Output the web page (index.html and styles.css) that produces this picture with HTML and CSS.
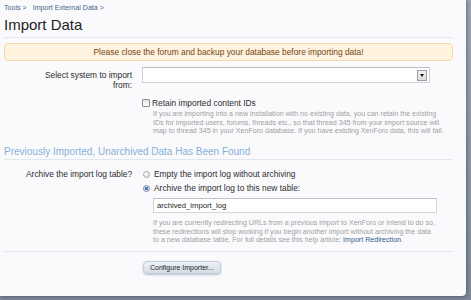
FILE: index.html
```html
<!DOCTYPE html>
<html>
<head>
<meta charset="utf-8">
<link rel="stylesheet" href="styles.css">
</head>
<body>
<div class="panel">
  <div class="breadcrumb"><span class="crumb">Tools &gt;</span><span class="crumb">Import External Data &gt;</span></div>
  <h1 class="title">Import Data</h1>
  <div class="notice">Please close the forum and backup your database before importing data!</div>
  <div class="form">
    <div class="row">
      <div class="label">Select system to import from:</div>
      <div class="ctrl">
        <div class="select"><span class="arrow"></span></div>
      </div>
    </div>
    <div class="row row-check">
      <div class="label"></div>
      <div class="ctrl">
        <div class="check"><span class="box"></span>Retain imported content IDs</div>
        <p class="explain">If you are importing into a new installation with no existing data, you can retain the existing<br>IDs for imported users, forums, threads etc., so that thread 345 from your import source will<br>map to thread 345 in your XenForo database. If you have existing XenForo data, this will fail.</p>
      </div>
    </div>
    <h2 class="subheading">Previously Imported, Unarchived Data Has Been Found</h2>
    <div class="row row-archive">
      <div class="label">Archive the import log table?</div>
      <div class="ctrl">
        <div class="radio"><span class="dot"></span>Empty the import log without archiving</div>
        <div class="radio radio-second"><span class="dot dot-on"></span>Archive the import log to this new table:</div>
        <div class="input">archived_import_log</div>
        <p class="explain explain-second">If you are currently redirecting URLs from a previous import to XenForo or intend to do so,<br>these redirections will stop working if you begin another import without archiving the data<br>to a new database table. For full details see this help article: <span class="link">Import Redirection</span>.</p>
      </div>
    </div>
    <div class="row row-submit">
      <div class="label"></div>
      <div class="ctrl">
        <span class="button">Configure Importer...</span>
      </div>
    </div>
  </div>
</div>
</body>
</html>
```

FILE: styles.css
```css
html, body {
  margin: 0;
  padding: 0;
}
body {
  width: 471px;
  height: 300px;
  overflow: hidden;
  background: linear-gradient(#9aa3b1, #7c8697);
  font-family: "Liberation Sans", Arial, sans-serif;
  color: #2d2d2d;
}
.panel {
  width: 466px;
  height: 296px;
  box-sizing: border-box;
  padding: 3px 13px 0 4px;
  background: #fafafd;
  border-bottom-right-radius: 4px;
  box-shadow: 1px 1px 3px rgba(40, 50, 70, 0.45);
}
.breadcrumb {
  display: flex;
  gap: 6px;
  font-size: 7.1px;
  line-height: 10px;
  color: #46648a;
}
.title {
  margin: 2.5px 0 0 0;
  padding-bottom: 3.5px;
  font-size: 15px;
  line-height: 18px;
  font-weight: normal;
  color: #1e1e1e;
  border-bottom: 1px solid #e6e8ee;
}
.notice {
  margin-top: 5px;
  height: 18px;
  box-sizing: border-box;
  border: 1px solid #f3d9a9;
  border-radius: 4px;
  background: #fff3df;
  color: #744514;
  font-size: 8.4px;
  line-height: 16px;
  text-align: center;
}
.form {
  padding-top: 6px;
}
.row {
  display: grid;
  grid-template-columns: 128px 1fr;
  column-gap: 10px;
}
.label {
  padding: 3px 0 0 22px;
  text-align: right;
  font-size: 8.4px;
  line-height: 10px;
  color: #2d2d2d;
}
.select {
  position: relative;
  width: 288px;
  height: 16px;
  box-sizing: border-box;
  background: #fff;
  border: 1px solid #cfd1d6;
  border-top-color: #b9bcc3;
}
.arrow {
  position: absolute;
  right: 2px;
  top: 2px;
  width: 10px;
  height: 11px;
  box-sizing: border-box;
  border: 1px solid #9a9da3;
  background: linear-gradient(#f4f4f4, #dcdcdc);
}
.arrow::after {
  content: "";
  position: absolute;
  left: 2px;
  top: 3px;
  border-left: 2px solid transparent;
  border-right: 2px solid transparent;
  border-top: 3px solid #111;
}
.row-check {
  margin-top: 8px;
}
.row-check .label,
.row-submit .label {
  padding-top: 0;
}
.check,
.radio {
  display: flex;
  align-items: center;
  font-size: 8.4px;
  line-height: 10px;
  color: #2d2d2d;
}
.box {
  width: 8px;
  height: 8px;
  box-sizing: border-box;
  margin-right: 2px;
  border: 1px solid #8d8f94;
  border-radius: 1px;
  background: linear-gradient(#e2e2e2, #fdfdfd);
}
.explain {
  margin: 2px 0 0 11px;
  font-size: 7.1px;
  line-height: 8.5px;
  color: #a0a0a0;
  white-space: nowrap;
}
.subheading {
  margin: 10px 0 0 0;
  padding-bottom: 1px;
  font-size: 10px;
  line-height: 12px;
  font-weight: normal;
  color: #88afd7;
  border-bottom: 1px solid #dfe7f1;
}
.row-archive {
  margin-top: 9.5px;
}
.row-archive .label {
  padding-top: 0;
  white-space: nowrap;
}
.dot {
  width: 7px;
  height: 7px;
  box-sizing: border-box;
  margin: 0 4px 0 1px;
  border: 1px solid #a3a6ab;
  border-radius: 50%;
  background: radial-gradient(circle at 40% 35%, #ffffff, #d9dadd);
}
.dot-on {
  border-color: #7c8896;
  background: radial-gradient(circle, #2f6fb6 0, #4a86c8 1.5px, #e8ecf1 2px);
}
.radio-second {
  margin-top: 4px;
}
.input {
  margin: 5px 0 0 11px;
  width: 284px;
  height: 15px;
  box-sizing: border-box;
  padding-left: 3px;
  background: #fff;
  border: 1px solid #d3d5da;
  border-top-color: #bfc2c9;
  font-size: 7.7px;
  line-height: 13px;
  color: #1e1e1e;
}
.explain-second {
  margin-top: 6px;
}
.link {
  color: #2f5b8a;
}
.row-submit {
  margin-top: 6px;
  padding-top: 4.5px;
  border-top: 1px solid #e6e8ee;
}
.button {
  display: inline-block;
  margin-left: 1px;
  padding: 0 6px;
  height: 13px;
  box-sizing: border-box;
  border: 1px solid #c3ccd8;
  border-radius: 4px;
  background: linear-gradient(#eef2f7, #d3dce7);
  box-shadow: 0 1px 2px rgba(60, 80, 110, 0.35);
  font-size: 7px;
  line-height: 11px;
  color: #1e1e1e;
}
```
